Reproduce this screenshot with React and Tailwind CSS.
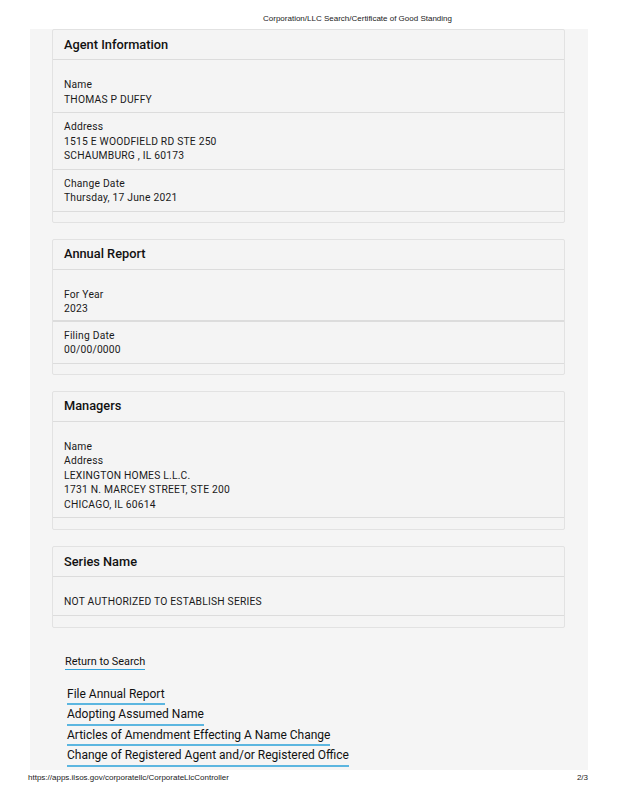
import React from 'react';

const sections = [
    {
        title: 'Agent Information',
        rows: [
            { lines: ['Name', 'THOMAS P DUFFY'] },
            { lines: ['Address', '1515 E WOODFIELD RD STE 250', 'SCHAUMBURG , IL 60173'] },
            { lines: ['Change Date', 'Thursday, 17 June 2021'] },
        ],
    },
    {
        title: 'Annual Report',
        rows: [
            { lines: ['For Year', '2023'], thick: true },
            { lines: ['Filing Date', '00/00/0000'] },
        ],
    },
    {
        title: 'Managers',
        extra: true,
        rows: [
            { lines: ['Name', 'Address', 'LEXINGTON HOMES L.L.C.', '1731 N. MARCEY STREET, STE 200', 'CHICAGO, IL 60614'] },
        ],
    },
    {
        title: 'Series Name',
        extra: true,
        rows: [{ lines: ['NOT AUTHORIZED TO ESTABLISH SERIES'] }],
    },
];

const links = [
    'File Annual Report',
    'Adopting Assumed Name',
    'Articles of Amendment Effecting A Name Change',
    'Change of Registered Agent and/or Registered Office',
];

const Card = ({ title, rows, extra }) => (
    <div className="bg-[#f4f4f4] border border-[#e2e2e2] rounded-[2px]">
        <div className="h-[30px] flex items-center px-[11px] border-b border-[#dcdcdc] text-[12.8px] font-medium text-[#111]">
            {title}
        </div>
        <div className={extra ? 'pt-[11px] pb-[11px]' : 'pt-[11px] pb-[10px]'}>
            {rows.map((row, i) => (
                <div
                    key={i}
                    className={
                        row.thick
                            ? 'px-[11px] pt-[7px] pb-[3px] border-b-2 border-[#dcdcdc]'
                            : 'px-[11px] pt-[7px] pb-[5px] border-b border-[#dcdcdc]'
                    }
                >
                    {row.lines.map((line, j) => (
                        <div key={j} className="text-[10.3px] leading-[14.5px] tracking-[0.02em] text-[#1a1a1a]">
                            {line}
                        </div>
                    ))}
                </div>
            ))}
        </div>
    </div>
);

const App = () => {
    return (
        <div className="w-[618px] h-[800px] bg-white font-['Roboto',sans-serif] overflow-hidden">
            <div className="h-[29px] pt-[14px] pl-[263px] font-['Liberation_Sans',sans-serif] text-[8px] leading-[10px] text-[#222]">
                Corporation/LLC Search/Certificate of Good Standing
            </div>

            <div className="ml-[30px] w-[558px] h-[741px] bg-[#f5f5f5] pl-[22px] pr-[23px]">
                <div className="flex flex-col gap-[16px]">
                    {sections.map((s) => (
                        <Card key={s.title} title={s.title} rows={s.rows} extra={s.extra} />
                    ))}
                </div>

                <div className="flex pl-[13px] pt-[27px]">
                    <span className="text-[10.9px] leading-[13px] pb-[1px] border-b border-[#31a3d9] text-[#111]">
                        Return to Search
                    </span>
                </div>

                <div className="pl-[15px] pt-[15px] flex flex-col items-start">
                    {links.map((l) => (
                        <span
                            key={l}
                            className="text-[12px] leading-[18.5px] border-b-2 border-[#5cb6e0] text-[#111]"
                        >
                            {l}
                        </span>
                    ))}
                </div>
            </div>

            <div className="flex justify-between pl-[28px] pr-[30px] pt-[3px] font-['Liberation_Sans',sans-serif] text-[8px] leading-[10px] text-[#222]">
                <span>https://apps.ilsos.gov/corporatellc/CorporateLlcController</span>
                <span>2/3</span>
            </div>
        </div>
    );
};

export default App;
